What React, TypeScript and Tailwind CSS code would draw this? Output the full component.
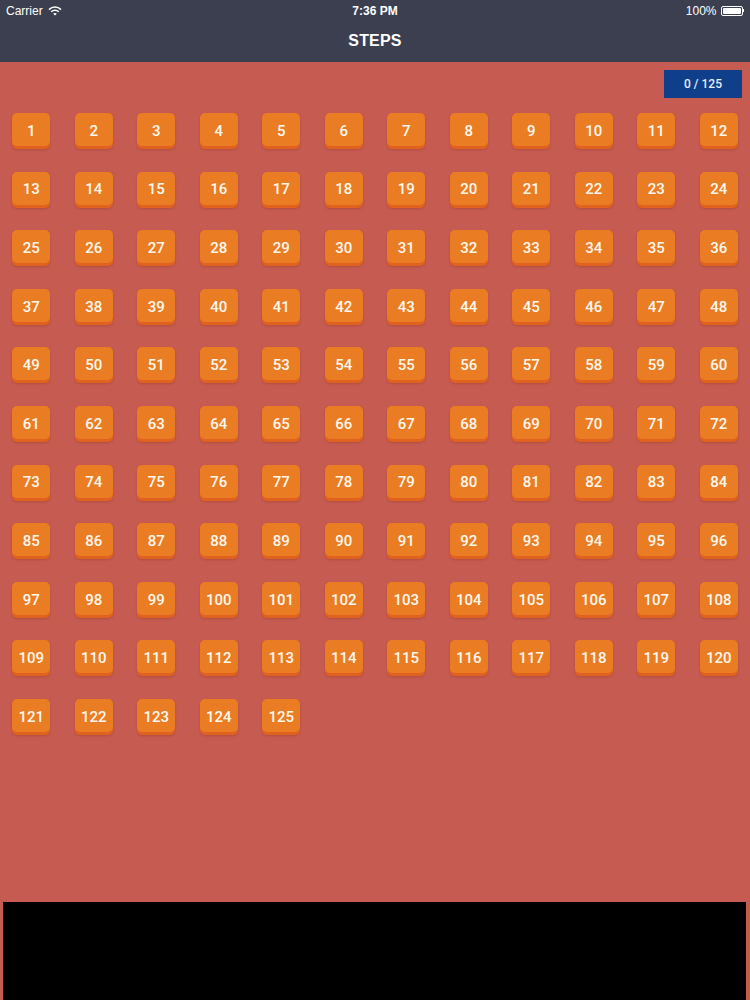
const steps = Array.from({ length: 125 }, (_, i) => i + 1);

function Wifi() {
  return (
    <svg width="14" height="10" viewBox="0 0 14 10" className="ml-[5px]">
      <path d="M1 3.6a8.5 8.5 0 0 1 12 0" fill="none" stroke="#fff" strokeWidth="1.5" />
      <path d="M3.2 5.8a5.4 5.4 0 0 1 7.6 0" fill="none" stroke="#fff" strokeWidth="1.5" />
      <path d="M7 9.6 5.2 7.8a2.6 2.6 0 0 1 3.6 0z" fill="#fff" />
    </svg>
  );
}

function Battery() {
  return (
    <div className="flex items-center ml-[4px]">
      <div className="w-[22px] h-[10px] border border-white rounded-[2px] p-[1px]">
        <div className="w-full h-full bg-white rounded-[1px]" />
      </div>
      <div className="w-[1.5px] h-[3px] bg-white" />
    </div>
  );
}

export default function App() {
  return (
    <div
      className="w-[750px] h-[1000px] bg-[#c55b51] flex flex-col overflow-hidden"
      style={{ fontFamily: '"Liberation Sans", Arial, sans-serif' }}
    >
      {/* Nav bar with status bar */}
      <div className="h-[62px] bg-[#3b3f4f] text-white shrink-0">
        <div className="h-[21px] px-[6px] flex items-center justify-between text-[12px] relative">
          <div className="flex items-center">
            <span>Carrier</span>
            <Wifi />
          </div>
          <span className="absolute left-1/2 -translate-x-1/2 font-bold">7:36 PM</span>
          <div className="flex items-center">
            <span>100%</span>
            <Battery />
          </div>
        </div>
        <div className="h-[41px] flex items-center justify-center pb-[1px]">
          <span className="text-[16px] font-bold tracking-[0.2px]">STEPS</span>
        </div>
      </div>

      {/* Counter */}
      <div className="flex justify-end pr-[8px] pt-[8px]">
        <div className="w-[78px] h-[28px] bg-[#0f3f8b] text-[#e8eefa] text-[12px] font-medium font-[Roboto] flex items-center justify-center">
          0 / 125
        </div>
      </div>

      {/* Steps grid */}
      <div className="grid grid-cols-12 pt-[15px] auto-rows-[58.6px]">
        {steps.map((n) => (
          <div key={n} className="flex justify-center">
            <div className="w-[38px] h-[36px] rounded-[5px] bg-[#e0621e] shadow-[0_1px_2px_rgba(120,40,20,0.25)]">
              <div className="h-[33px] pt-[3px] rounded-[5px] bg-[#ea7d24] text-[#fff8ee] text-[15px] font-medium font-[Roboto] flex items-center justify-center">
                {n}
              </div>
            </div>
          </div>
        ))}
      </div>

      <div className="flex-1" />

      {/* Ad/banner area */}
      <div className="h-[98px] ml-[3px] mr-[4px] bg-black shrink-0" />
    </div>
  );
}
